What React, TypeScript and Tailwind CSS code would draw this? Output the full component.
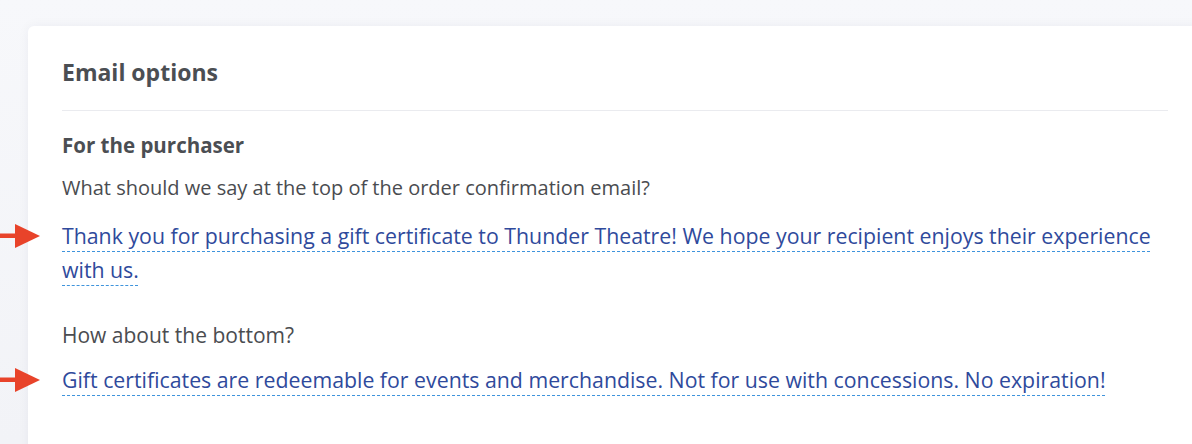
import React from "react";

const Arrow = () => (
  <svg
    className="absolute left-[-62px] top-[3px]"
    width="42"
    height="28"
    viewBox="0 0 42 28"
  >
    <rect x="0" y="11.5" width="17" height="4.5" fill="#e8432a" />
    <polygon points="15,2 40,14 15,26" fill="#e8432a" />
  </svg>
);

const EditableText = ({ children }: { children: React.ReactNode }) => (
  <div className="relative text-[21.3px] leading-[34px] text-[#2f4a9c]">
    <Arrow />
    <span className="underline decoration-[#3f94dc] decoration-dashed decoration-1 underline-offset-[7px] [text-decoration-skip-ink:none]">
      {children}
    </span>
  </div>
);

export default function App() {
  return (
    <div
      className="h-[444px] w-[1192px] overflow-hidden bg-gradient-to-b from-[#f7f8fb] to-[#f2f3f7] pt-[26px] pl-[28px]"
      style={{ fontFamily: "'Open Sans', 'Noto Sans', sans-serif" }}
    >
      <div className="h-[460px] w-[1174px] rounded-tl-[6px] bg-white px-[34px] pt-[30px] shadow-[0_0_12px_rgba(30,40,80,0.05)]">
        <h2 className="pb-[22px] text-[23px] font-bold leading-[32px] text-[#4b4e53]">
          Email options
        </h2>
        <div className="border-t border-[#eaebef]" />
        <h3 className="mt-[19px] text-[20.5px] font-bold leading-[30px] text-[#4b4e53]">
          For the purchaser
        </h3>
        <p className="mt-[13px] text-[20px] leading-[30px] text-[#4a4c50]">
          What should we say at the top of the order confirmation email?
        </p>
        <div className="mt-[16px]">
          <EditableText>
            Thank you for purchasing a gift certificate to Thunder Theatre! We hope your
            recipient enjoys their experience with us.
          </EditableText>
        </div>
        <p className="mt-[33px] text-[21px] leading-[30px] text-[#4a4c50]">
          How about the bottom?
        </p>
        <div className="mt-[13px]">
          <EditableText>
            Gift certificates are redeemable for events and merchandise. Not for use with
            concessions. No expiration!
          </EditableText>
        </div>
      </div>
    </div>
  );
}
